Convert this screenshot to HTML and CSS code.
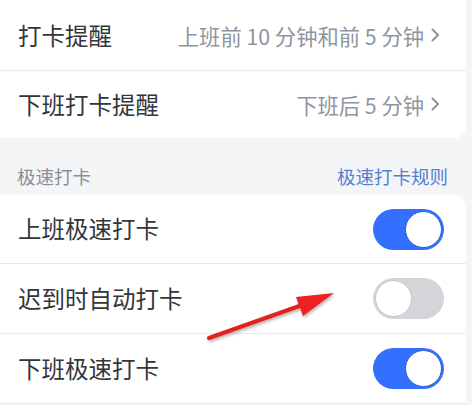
FILE: index.html
```html
<!DOCTYPE html>
<html lang="zh-CN">
<head>
<meta charset="utf-8">
<link rel="stylesheet" href="styles.css">
</head>
<body>
<div class="page">
  <div class="card card-top">
    <div class="row">
      <span class="label">打卡提醒</span>
      <span class="value">上班前 10 分钟和前 5 分钟<svg class="chev" viewBox="0 0 10 16" width="10" height="16"><path d="M2.5 2.5 L8 8 L2.5 13.5" fill="none" stroke="#8f959e" stroke-width="2" stroke-linecap="round" stroke-linejoin="round"/></svg></span>
    </div>
    <div class="row">
      <span class="label">下班打卡提醒</span>
      <span class="value">下班后 5 分钟<svg class="chev" viewBox="0 0 10 16" width="10" height="16"><path d="M2.5 2.5 L8 8 L2.5 13.5" fill="none" stroke="#8f959e" stroke-width="2" stroke-linecap="round" stroke-linejoin="round"/></svg></span>
    </div>
  </div>
  <div class="section-head">
    <span class="section-title">极速打卡</span>
    <span class="section-link">极速打卡规则</span>
  </div>
  <div class="card card-bottom">
    <div class="row">
      <span class="label">上班极速打卡</span>
      <span class="toggle on"><span class="knob"></span></span>
    </div>
    <div class="row">
      <span class="label">迟到时自动打卡</span>
      <span class="toggle off"><span class="knob"></span></span>
    </div>
    <div class="row">
      <span class="label">下班极速打卡</span>
      <span class="toggle on"><span class="knob"></span></span>
    </div>
  </div>
  <svg class="arrow" width="472" height="405" viewBox="0 0 472 405">
    <defs>
      <filter id="sh" x="-20%" y="-20%" width="140%" height="140%">
        <feDropShadow dx="1" dy="2" stdDeviation="1.5" flood-color="#000" flood-opacity="0.3"/>
      </filter>
    </defs>
    <g filter="url(#sh)">
      <line x1="209" y1="338" x2="305" y2="304" stroke="#e3211f" stroke-width="4" stroke-linecap="round"/>
      <polygon points="334,293 303,316 296,297" fill="#ee2222"/>
    </g>
  </svg>
</div>
</body>
</html>
```

FILE: styles.css
```css
html, body {
  margin: 0;
  padding: 0;
}
body {
  background: #f4f5f7;
  font-family: "Noto Sans CJK SC", "Noto Sans", sans-serif;
}
.page {
  position: relative;
  width: 472px;
  height: 405px;
  overflow: hidden;
}
.card {
  width: 466px;
  background: #ffffff;
}
.card-top {
  border-radius: 0 0 12px 0;
  padding-top: 1px;
}
.card-bottom {
  border-radius: 0 12px 0 0;
}
.row {
  display: flex;
  align-items: center;
  justify-content: space-between;
  height: 70px;
  padding: 0 22px 0 18px;
  box-sizing: border-box;
  border-bottom: 1px solid #e9eaec;
}
.card-top .row:last-child {
  border-bottom: none;
  height: 67px;
}
.card-top .row {
  padding-right: 26px;
}
.label {
  font-size: 23.5px;
  color: #33363b;
  line-height: 1;
}
.value {
  font-size: 21.3px;
  color: #8f959e;
  display: flex;
  align-items: center;
  line-height: 1;
}
.chev {
  margin-left: 6px;
}
.section-head {
  display: flex;
  justify-content: space-between;
  align-items: flex-end;
  height: 57px;
  padding: 0 24px 8px 17px;
  box-sizing: border-box;
}
.section-title {
  font-size: 18.5px;
  color: #8a8f97;
  line-height: 1.2;
}
.section-link {
  font-size: 18.5px;
  color: #5580d2;
  line-height: 1.2;
}
.card-bottom .row:first-child {
  height: 69px;
}
.toggle {
  position: relative;
  width: 71px;
  height: 41px;
  border-radius: 21px;
  box-sizing: border-box;
  display: block;
}
.toggle.on {
  background: #3370ff;
}
.toggle.off {
  background: #d3d5d8;
}
.knob {
  position: absolute;
  top: 2px;
  width: 37px;
  height: 37px;
  border-radius: 50%;
  background: #ffffff;
  box-sizing: border-box;
}
.toggle.on .knob {
  right: 2px;
  border: 1.5px solid #2c5ccc;
}
.toggle.off .knob {
  left: 2px;
  border: 1.5px solid #c4c6c9;
}
.arrow {
  position: absolute;
  left: 0;
  top: 0;
  pointer-events: none;
}
```
